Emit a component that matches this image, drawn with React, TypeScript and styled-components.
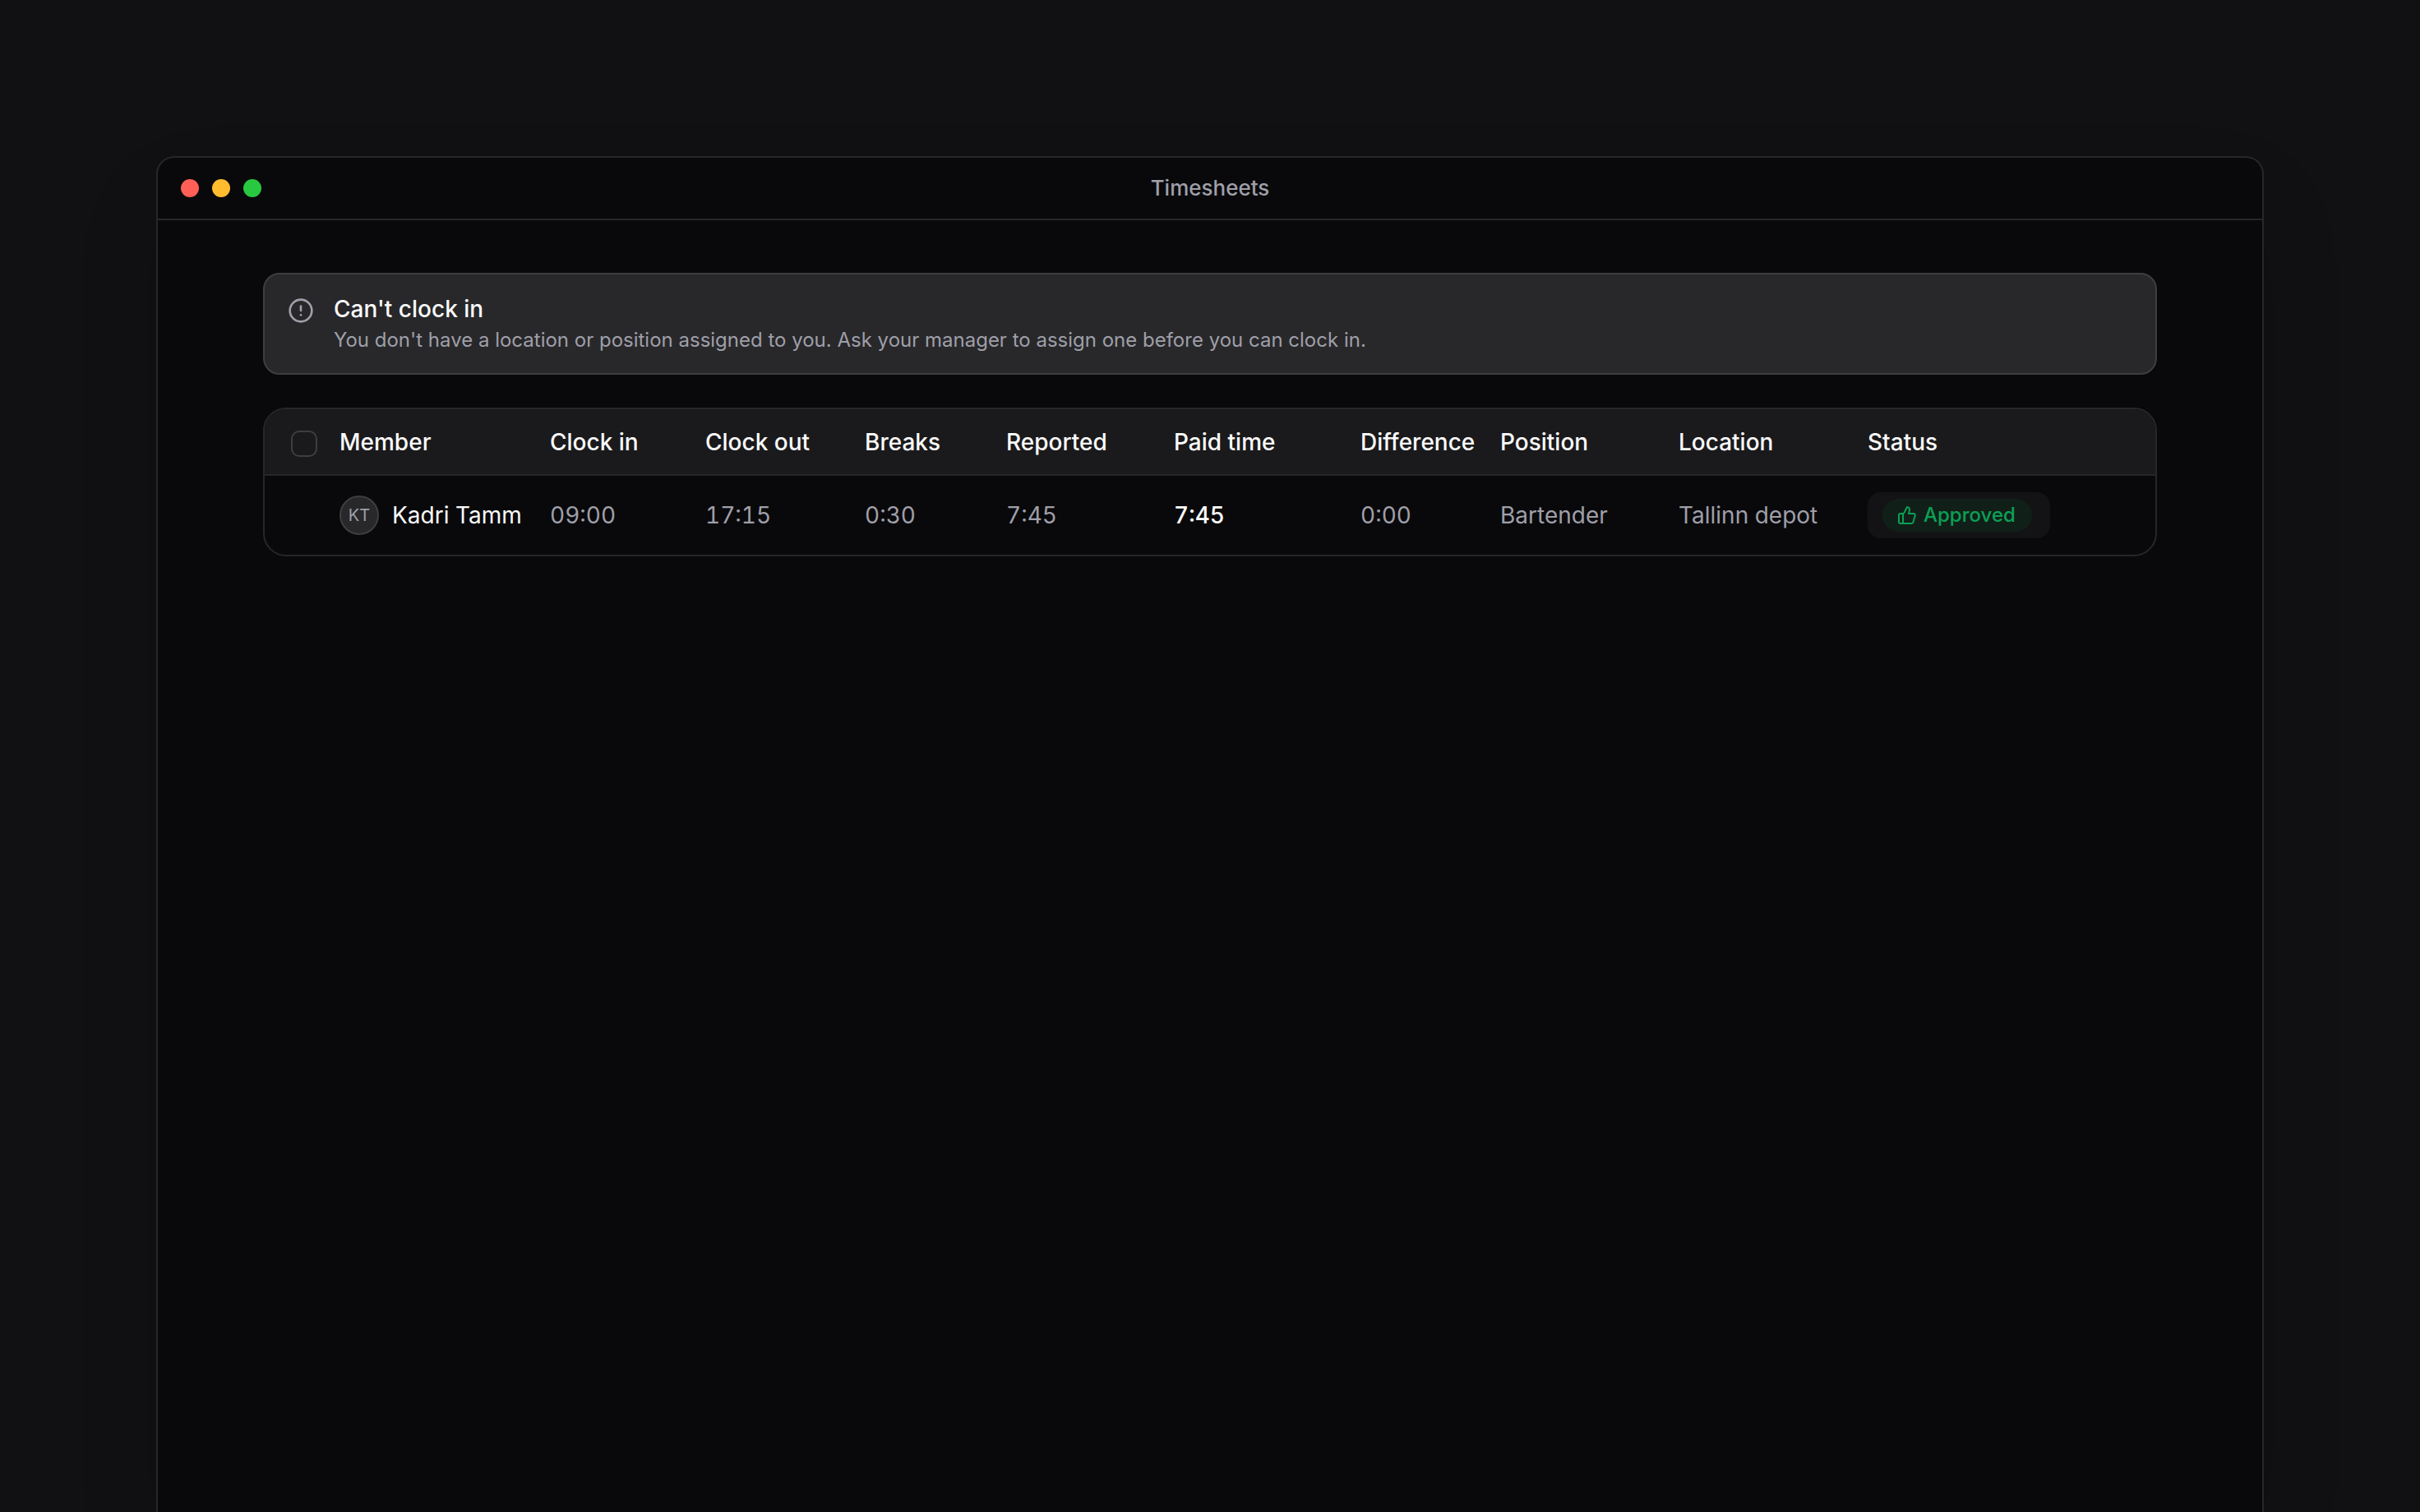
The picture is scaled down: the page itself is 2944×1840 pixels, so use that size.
import React from 'react';
import styled, { createGlobalStyle } from 'styled-components';
import { CircleAlert, ThumbsUp } from 'lucide-react';

const color = {
  page: '#111113',
  surface: '#09090b',
  raised: '#1a1a1c',
  muted: '#28282a',
  line: '#27272a',
  lineStrong: '#3e3e41',
  text: '#fafafa',
  textMuted: '#9f9fa9',
  success: '#0ba055',
  successSoft: '#111f19',
};

const GlobalStyle = createGlobalStyle`
  * {
    box-sizing: border-box;
  }
  body {
    margin: 0;
    background: ${color.page};
    color: ${color.text};
    font-family: Inter, "Liberation Sans", sans-serif;
    font-size: 28px;
    line-height: 40px;
    font-optical-sizing: none;
    -webkit-font-smoothing: antialiased;
  }
`;

const Page = styled.div`
  display: flex;
  height: 100vh;
  padding: 190px 190px 0;
  overflow: hidden;
`;

const AppWindow = styled.section`
  flex: 1;
  min-width: 0;
  border: 2px solid ${color.line};
  border-bottom: 0;
  border-radius: 22px 22px 0 0;
  background: ${color.surface};
  box-shadow: 0 50px 100px -24px rgba(0, 0, 0, 0.25);
`;

const TitleBar = styled.header`
  display: grid;
  grid-template-columns: 1fr auto 1fr;
  align-items: center;
  height: 76px;
  padding: 0 28px;
  border-bottom: 2px solid ${color.line};
`;

const WindowControls = styled.div`
  display: flex;
  gap: 16px;
`;

const Control = styled.button<{ $fill: string }>`
  width: 22px;
  height: 22px;
  padding: 0;
  border: 0;
  border-radius: 50%;
  background: ${(p) => p.$fill};
`;

const Title = styled.h1`
  margin: 0;
  color: ${color.textMuted};
  font-size: 26px;
  font-weight: 500;
`;

const Content = styled.main`
  display: flex;
  flex-direction: column;
  gap: 40px;
  padding: 64px 128px;
`;

const Notice = styled.div`
  display: flex;
  gap: 24px;
  padding: 22px 28px;
  border: 2px solid ${color.lineStrong};
  border-radius: 20px;
  background: ${color.muted};
`;

const NoticeIcon = styled(CircleAlert)`
  flex: none;
  margin-top: 6px;
  color: ${color.textMuted};
`;

const NoticeTitle = styled.h2`
  margin: 0;
  font-size: 28px;
  font-weight: 500;
  line-height: 40px;
`;

const NoticeText = styled.p`
  margin: 0;
  color: ${color.textMuted};
  font-size: 24px;
  line-height: 36px;
`;

const TableFrame = styled.div`
  overflow: hidden;
  border: 2px solid ${color.line};
  border-radius: 28px;
`;

const Table = styled.table`
  width: 100%;
  border-collapse: separate;
  border-spacing: 0;
  table-layout: fixed;
`;

const Column = styled.col<{ $width: number }>`
  width: ${(p) => p.$width}px;
`;

const HeadCell = styled.th`
  height: 81px;
  padding: 0 16px;
  border-bottom: 2px solid ${color.line};
  background: ${color.raised};
  font-weight: 500;
  text-align: left;
  white-space: nowrap;
`;

const SelectCell = styled(HeadCell)`
  padding: 4px 0 0 32px;
`;

const Cell = styled.td<{ $strong?: boolean }>`
  height: 96px;
  padding: 0 16px;
  color: ${(p) => (p.$strong ? color.text : color.textMuted)};
  font-weight: ${(p) => (p.$strong ? 500 : 400)};
  font-variant-numeric: tabular-nums;
  white-space: nowrap;
`;

const Checkbox = styled.input`
  display: block;
  width: 32px;
  height: 32px;
  margin: 0;
  appearance: none;
  border: 2px solid ${color.lineStrong};
  border-radius: 10px;
  background: transparent;

  &:checked {
    background: ${color.textMuted};
  }
`;

const Member = styled.div`
  display: flex;
  align-items: center;
  gap: 16px;
  color: ${color.text};
`;

const Avatar = styled.span`
  display: grid;
  flex: none;
  place-items: center;
  width: 48px;
  height: 48px;
  border: 2px solid ${color.lineStrong};
  border-radius: 50%;
  background: ${color.muted};
  color: ${color.textMuted};
  font-size: 20px;
`;

const StatusButton = styled.button`
  display: flex;
  align-items: center;
  height: 56px;
  padding: 0 22px 0 18px;
  border: 0;
  border-radius: 16px;
  background: #131315;
  font: inherit;
`;

const Badge = styled.span`
  display: flex;
  align-items: center;
  gap: 8px;
  height: 40px;
  padding: 0 20px 0 18px;
  border-radius: 20px;
  background: ${color.successSoft};
  color: ${color.success};
  font-size: 24px;
  font-weight: 500;
`;

const controls = [
  { label: 'Close', fill: '#ff5f57' },
  { label: 'Minimize', fill: '#febc2e' },
  { label: 'Zoom', fill: '#28c840' },
];

const columns = [
  { title: 'Member', width: 256 },
  { title: 'Clock in', width: 189 },
  { title: 'Clock out', width: 194 },
  { title: 'Breaks', width: 172 },
  { title: 'Reported', width: 204 },
  { title: 'Paid time', width: 227 },
  { title: 'Difference', width: 170 },
  { title: 'Position', width: 217 },
  { title: 'Location', width: 230 },
  { title: 'Status', width: 366 },
];

const entries = [
  {
    initials: 'KT',
    name: 'Kadri Tamm',
    clockIn: '09:00',
    clockOut: '17:15',
    breaks: '0:30',
    reported: '7:45',
    paid: '7:45',
    difference: '0:00',
    position: 'Bartender',
    location: 'Tallinn depot',
    status: 'Approved',
  },
];

export default function App() {
  return (
    <>
      <GlobalStyle />
      <Page>
        <AppWindow>
          <TitleBar>
            <WindowControls>
              {controls.map((c) => (
                <Control key={c.label} type="button" aria-label={c.label} $fill={c.fill} />
              ))}
            </WindowControls>
            <Title>Timesheets</Title>
          </TitleBar>
          <Content>
            <Notice role="status">
              <NoticeIcon size={32} strokeWidth={2} aria-hidden />
              <div>
                <NoticeTitle>Can't clock in</NoticeTitle>
                <NoticeText>
                  You don't have a location or position assigned to you. Ask your manager to assign
                  one before you can clock in.
                </NoticeText>
              </div>
            </Notice>
            <TableFrame>
              <Table>
                <colgroup>
                  <Column $width={75} />
                  {columns.map((c) => (
                    <Column key={c.title} $width={c.width} />
                  ))}
                </colgroup>
                <thead>
                  <tr>
                    <SelectCell scope="col">
                      <Checkbox type="checkbox" aria-label="Select all" />
                    </SelectCell>
                    {columns.map((c) => (
                      <HeadCell key={c.title} scope="col">
                        {c.title}
                      </HeadCell>
                    ))}
                  </tr>
                </thead>
                <tbody>
                  {entries.map((e) => (
                    <tr key={e.name}>
                      <Cell />
                      <Cell>
                        <Member>
                          <Avatar aria-hidden>{e.initials}</Avatar>
                          {e.name}
                        </Member>
                      </Cell>
                      <Cell>{e.clockIn}</Cell>
                      <Cell>{e.clockOut}</Cell>
                      <Cell>{e.breaks}</Cell>
                      <Cell>{e.reported}</Cell>
                      <Cell $strong>{e.paid}</Cell>
                      <Cell>{e.difference}</Cell>
                      <Cell>{e.position}</Cell>
                      <Cell>{e.location}</Cell>
                      <Cell>
                        <StatusButton type="button">
                          <Badge>
                            <ThumbsUp size={24} strokeWidth={2} aria-hidden />
                            {e.status}
                          </Badge>
                        </StatusButton>
                      </Cell>
                    </tr>
                  ))}
                </tbody>
              </Table>
            </TableFrame>
          </Content>
        </AppWindow>
      </Page>
    </>
  );
}
